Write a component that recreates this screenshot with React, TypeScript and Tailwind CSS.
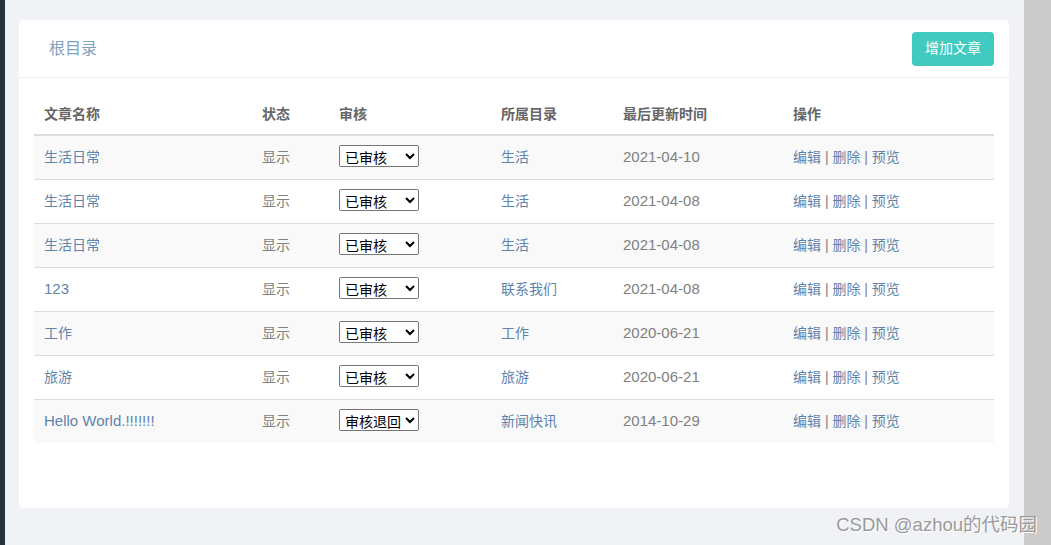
import React from 'react';

type Article = {
  title: string;
  status: string;
  audit: string;
  category: string;
  updated: string;
};

const articles: Article[] = [
  { title: '生活日常', status: '显示', audit: '已审核', category: '生活', updated: '2021-04-10' },
  { title: '生活日常', status: '显示', audit: '已审核', category: '生活', updated: '2021-04-08' },
  { title: '生活日常', status: '显示', audit: '已审核', category: '生活', updated: '2021-04-08' },
  { title: '123', status: '显示', audit: '已审核', category: '联系我们', updated: '2021-04-08' },
  { title: '工作', status: '显示', audit: '已审核', category: '工作', updated: '2020-06-21' },
  { title: '旅游', status: '显示', audit: '已审核', category: '旅游', updated: '2020-06-21' },
  { title: 'Hello World.!!!!!!!', status: '显示', audit: '审核退回', category: '新闻快讯', updated: '2014-10-29' },
];

const font = { fontFamily: '"Liberation Sans", "Noto Sans CJK SC", sans-serif' };

// latin-only strings render a touch larger in the screenshot
const isLatin = (s: string) => /^[\x00-\x7f]+$/.test(s);

const App: React.FC = () => {
  return (
    <div className="relative flex w-full h-[545px] overflow-hidden" style={font}>
      {/* left nav edge */}
      <div className="w-[5px] bg-[#263240]" />

      <div className="flex-1 bg-[#f0f2f5] pt-[20px] pl-[14px] pr-[15px]">
        <div className="bg-white rounded-[4px] h-[488px] flex flex-col">
          {/* header */}
          <div className="h-[58px] flex items-center justify-between pl-[30px] pr-[15px] border-b border-[#eef0f4]">
            <span className="text-[16px] text-[#7fa3bd]">根目录</span>
            <button className="w-[82px] h-[34px] rounded-[4px] bg-[#41cbc0] text-white text-[14px]">
              增加文章
            </button>
          </div>

          {/* table */}
          <div className="px-[15px] pt-[16px]">
            <table className="w-full border-collapse text-[14px] text-left">
              <thead>
                <tr className="h-[41px] border-b-2 border-[#dddddd] text-[#666666]">
                  <th className="w-[218px] pl-[10px] font-bold">文章名称</th>
                  <th className="w-[77px] pl-[10px] font-bold">状态</th>
                  <th className="w-[162px] pl-[10px] font-bold">审核</th>
                  <th className="w-[122px] pl-[10px] font-bold">所属目录</th>
                  <th className="w-[170px] pl-[10px] font-bold">最后更新时间</th>
                  <th className="pl-[10px] font-bold">操作</th>
                </tr>
              </thead>
              <tbody>
                {articles.map((a, i) => (
                  <tr
                    key={i}
                    className={`h-[44px] border-t border-[#dddddd] ${i % 2 === 0 ? 'bg-[#f9f9f9]' : 'bg-white'}`}
                  >
                    <td className={`pl-[10px] text-[#5f84ab] ${isLatin(a.title) ? 'text-[15px]' : ''}`}>{a.title}</td>
                    <td className="pl-[10px] text-[#808080]">{a.status}</td>
                    <td className="pl-[10px]">
                      <select
                        defaultValue={a.audit}
                        className="w-[80px] h-[22px] border border-[#767676] rounded-[2px] bg-white text-black text-[14px] pl-[1px]"
                        style={{ fontFamily: '"Noto Sans CJK SC", sans-serif' }}
                      >
                        <option>已审核</option>
                        <option>审核退回</option>
                        <option>未审核</option>
                      </select>
                    </td>
                    <td className="pl-[10px] text-[#5f84ab]">{a.category}</td>
                    <td className="pl-[10px] text-[#808080] text-[15px]">{a.updated}</td>
                    <td className="pl-[10px] text-[#808080]">
                      <a className="text-[#5f84ab]">编辑</a> | <a className="text-[#5f84ab]">删除</a> |{' '}
                      <a className="text-[#5f84ab]">预览</a>
                    </td>
                  </tr>
                ))}
              </tbody>
            </table>
          </div>
        </div>
      </div>

      {/* right scrollbar strip */}
      <div className="w-[27px] bg-[#cbcbcb]" />

      {/* watermark */}
      <div
        className="absolute right-[14px] bottom-[6px] text-[18.5px] text-[#9a9a9a] [text-shadow:1px_1px_0_#ffffff]"
        style={{ fontFamily: '"Liberation Sans", "Noto Sans CJK SC", sans-serif' }}
      >
        CSDN @azhou的代码园
      </div>
    </div>
  );
};

export default App;
